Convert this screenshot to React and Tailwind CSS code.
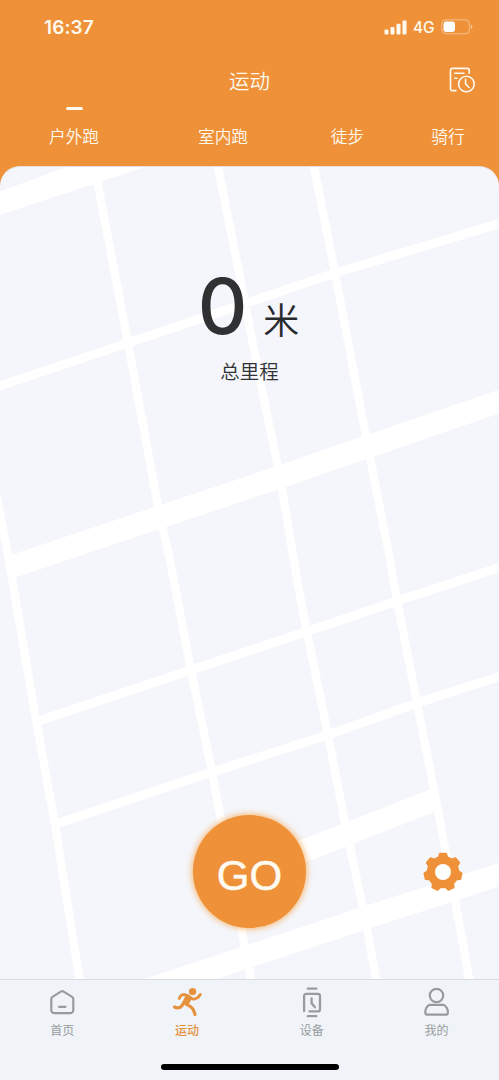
import React from "react";

const tabs = ["户外跑", "室内跑", "徒步", "骑行"];

function StatusBar() {
  return (
    <div className="flex h-[54px] items-center justify-between pl-[44px] pr-[26px]">
      <span className="mt-[2px] font-[Inter] text-[19px] leading-6 font-semibold tracking-[0.1px]">16:37</span>
      <div className="flex items-center">
        <svg width="23" height="15" viewBox="0 0 23 15" fill="currentColor">
          <rect x="0.5" y="9.5" width="4" height="5" rx="1" />
          <rect x="6.5" y="7" width="4" height="7.5" rx="1" />
          <rect x="12.5" y="3.7" width="4" height="10.8" rx="1" />
          <rect x="18.5" y="0.4" width="4" height="14.1" rx="1" />
        </svg>
        <span className="ml-[6px] mt-[2px] w-[22px] font-[Inter] text-[15.5px] leading-5 font-medium tracking-[-0.2px]">4G</span>
        <svg className="ml-[6px]" width="32" height="16" viewBox="0 0 32 16" fill="none">
          <rect x="0.8" y="0.8" width="27.5" height="14" rx="4" stroke="#fff" strokeOpacity=".45" />
          <rect x="2.5" y="2.6" width="11.5" height="10.4" rx="2.4" fill="#fff" />
          <path d="M30 5.5q1.5.8 1.5 2.3T30 10.1z" fill="#fff" fillOpacity=".5" />
        </svg>
      </div>
    </div>
  );
}

function HistoryIcon() {
  return (
    <svg width="27" height="27" viewBox="0 0 27 27" fill="none" stroke="currentColor" strokeWidth="1.6" strokeLinecap="round" strokeLinejoin="round">
      <path d="M20.2 6.3V3.2a1.8 1.8 0 0 0-1.8-1.8H3.3a1.8 1.8 0 0 0-1.8 1.8v18.6a1.8 1.8 0 0 0 1.8 1.8H7" />
      <path d="M5.7 6.2H15M5.7 11.3H8" />
      <circle cx="17.4" cy="17" r="7.8" />
      <path d="M16.6 12.3v4.9l3.500 3.300" />
    </svg>
  );
}

function MapBackground() {
  return (
    <svg className="absolute inset-0 h-full w-full" viewBox="0 167 499 812" fill="none" stroke="#fff" preserveAspectRatio="none">
      <path d="M0 191.5L67 167H145L0 215z" fill="#fff" stroke="none" />
      <g strokeWidth="9">
        <path d="M-5 387.5L128 343L335 273L505 222" />
        <path d="M37 721.5L191 670L307 631.5L397 601L504 566" />
        <path d="M56 824L212 772L328 735L417 703L504 675" />
      </g>
      <g strokeWidth="22.5">
        <path d="M8 568L160 517L280 477L368 446.5L504 400" />
        <path d="M120 999L247 957L365 918L504 873" />
        <path d="M260 868L305 850.5L434 800" />
      </g>
      <g strokeWidth="8.2">
        <path d="M-5 488L9 560L36 720L55 824L81 989" />
        <path d="M97 180L128 343L160 517L170 560L191 670L212 772L243 937L253 989" />
        <path d="M217 162L243 293L258 370L280 477L297 580L307 632L328 735L345 823L365 918L378 989" />
        <path d="M313 162L335 273L368 447L390 560L397 600L417 703L436 800L455 900L471 989" />
      </g>
    </svg>
  );
}

const gearPoints = Array.from({ length: 7 }, (_, i) =>
  [
    [-21, 15.2],
    [-15.5, 15.4],
    [-9, 18.6],
    [9, 18.6],
    [15.5, 15.4],
    [21, 15.2],
  ]
    .map(([offset, radius]) => {
      const angle = ((i * 360) / 7 + offset - 90) * (Math.PI / 180);
      return `${(20 + radius * Math.cos(angle)).toFixed(2)},${(20 + radius * Math.sin(angle)).toFixed(2)}`;
    })
    .join(" ")
).join(" ");

function GearIcon() {
  return (
    <svg width="40" height="40" viewBox="0 0 40 40">
      <polygon points={gearPoints} fill="#ee9138" stroke="#ee9138" strokeWidth="2" strokeLinejoin="round" />
      <circle cx="20" cy="20" r="8" fill="#fff" />
    </svg>
  );
}

function HomeIcon() {
  return (
    <svg width="32" height="32" viewBox="0 0 32 32" fill="none" stroke="currentColor" strokeWidth="2.2" strokeLinecap="round" strokeLinejoin="round">
      <path d="M14.8 5.6 6.5 10.9a2.4 2.4 0 0 0-1.200 2.100V24.200a3 3 0 0 0 3 3h16a3 3 0 0 0 3-3V13a2.400 2.400 0 0 0-1.200-2.100L17.600 5.600a2.600 2.600 0 0 0-2.800 0z" />
      <path d="M13 20.800h6.500" />
    </svg>
  );
}

function RunIcon() {
  return (
    <svg width="32" height="32" viewBox="0 0 32 32" fill="none" stroke="currentColor" strokeLinecap="round" strokeLinejoin="round">
      <circle cx="21.600" cy="5.600" r="3.700" fill="currentColor" stroke="none" />
      <path d="M8.300 12.400Q9.500 8.600 12.800 8.400Q16.500 9 20.300 12.200Q22.500 14 25.500 12.300Q28 10.800 29.300 8.500" strokeWidth="2.900" />
      <path d="M15.800 10L19 12.800L16 18.500L13.200 16z" fill="currentColor" strokeWidth="3" />
      <path d="M12.800 16.500Q10.500 21.500 7.500 21.800Q5.500 22 3.400 21" strokeWidth="3.100" />
      <path d="M14.800 18L19.500 20.600Q22.500 22.500 24 28.500" strokeWidth="3.100" />
    </svg>
  );
}

function WatchIcon() {
  return (
    <svg width="32" height="32" viewBox="0 0 32 32" fill="none" stroke="currentColor" strokeWidth="2.300" strokeLinecap="round" strokeLinejoin="round">
      <path d="M11.800 2.700h8.500M11.800 30.200h8.500" />
      <path d="M8.100 25V10a2.200 2.200 0 0 1 2.200-2.200h11.500A2.200 2.200 0 0 1 24 10v13.200a2.200 2.200 0 0 1-2.200 2.200h-8.300" />
      <path d="M15.600 12.500v4.800l3.300 4" />
    </svg>
  );
}

function UserIcon() {
  return (
    <svg width="32" height="32" viewBox="0 0 32 32" fill="none" stroke="currentColor" strokeWidth="2.200" strokeLinecap="round" strokeLinejoin="round">
      <circle cx="15.500" cy="9.500" r="6.700" />
      <path d="M8.300 18.900h14.500c2.500 1.600 4.100 4 4.100 7.500a2.300 2.300 0 0 1-2.300 2.300H6.600a2.300 2.300 0 0 1-2.300-2.300c0-3.500 1.500-5.900 4-7.500z" />
    </svg>
  );
}

const navItems = [
  { label: "首页", Icon: HomeIcon },
  { label: "运动", Icon: RunIcon, active: true },
  { label: "设备", Icon: WatchIcon },
  { label: "我的", Icon: UserIcon },
];

export default function App() {
  return (
    <div className="flex h-[1080px] w-[499px] flex-col overflow-hidden bg-[#ee9138] font-['Noto_Sans_CJK_SC',sans-serif]">
      <header className="flex h-[166px] shrink-0 flex-col text-[#fffaf0]">
        <StatusBar />
        <div className="grid h-[52px] grid-cols-[1fr_auto_1fr] items-center pr-[23px] pl-[23px]">
          <h1 className="col-start-2 -mt-[1px] text-[20.5px] leading-8 font-[350]">运动</h1>
          <button className="justify-self-end">
            <HistoryIcon />
          </button>
        </div>
        <nav className="grid grid-cols-[148px_150px_99px_102px]">
          {tabs.map((tab, i) => (
            <button key={tab} className="flex flex-col items-center text-[16.7px] leading-6 font-[350]">
              <span className={i === 0 ? "mt-[1px] h-[3px] w-[17px] rounded-full bg-[#fffaf0]" : "mt-[1px] h-[3px]"} />
              <span className="mt-[14px]">{tab}</span>
            </button>
          ))}
        </nav>
      </header>

      <main className="relative min-h-0 flex-1 overflow-hidden rounded-t-[20px] border-t border-[#e3e0df] bg-[#f4f6fb]">
        <MapBackground />
        <div className="relative flex h-full flex-col items-center">
          <div className="mt-[92px] -ml-[2px] flex items-baseline text-[#303133]">
            <span className="font-[Inter] text-[77px] leading-[94px] font-medium">0</span>
            <span className="ml-[16px] text-[36px] leading-[50px] font-[350] text-[#292a2e]">米</span>
          </div>
          <div className="mt-[4px] text-[19.5px] leading-7 font-[350] text-[#303133]">总里程</div>
          <div className="mt-auto mb-[51px] grid w-full grid-cols-[1fr_auto_1fr] items-center">
            <button className="col-start-2 flex size-[113px] items-center justify-center rounded-full bg-[#ee9138] pt-[8px] font-['Liberation_Sans',sans-serif] text-[42px] leading-none text-[#fffaf0] shadow-[0_0_6px_1px_#f6b56f]">
              <span className="[-webkit-text-stroke:0.5px_#fffaf0]">GO</span>
            </button>
            <button className="mr-[36px] justify-self-end">
              <GearIcon />
            </button>
          </div>
        </div>
      </main>

      <footer className="flex h-[101px] shrink-0 flex-col items-center border-t border-[#d9dce1] bg-[#f0f4f8]">
        <nav className="grid w-full grid-cols-4">
          {navItems.map(({ label, Icon, active }) => (
            <button key={label} className={`flex flex-col items-center pt-[6px] ${active ? "text-[#e6913c]" : "text-[#989b9e]"}`}>
              <Icon />
              <span className={`mt-[3px] text-[12px] leading-[18px] ${active ? "font-medium" : ""}`}>{label}</span>
            </button>
          ))}
        </nav>
        <div className="mt-auto mb-[10px] h-[6px] w-[178px] rounded-full bg-black" />
      </footer>
    </div>
  );
}
